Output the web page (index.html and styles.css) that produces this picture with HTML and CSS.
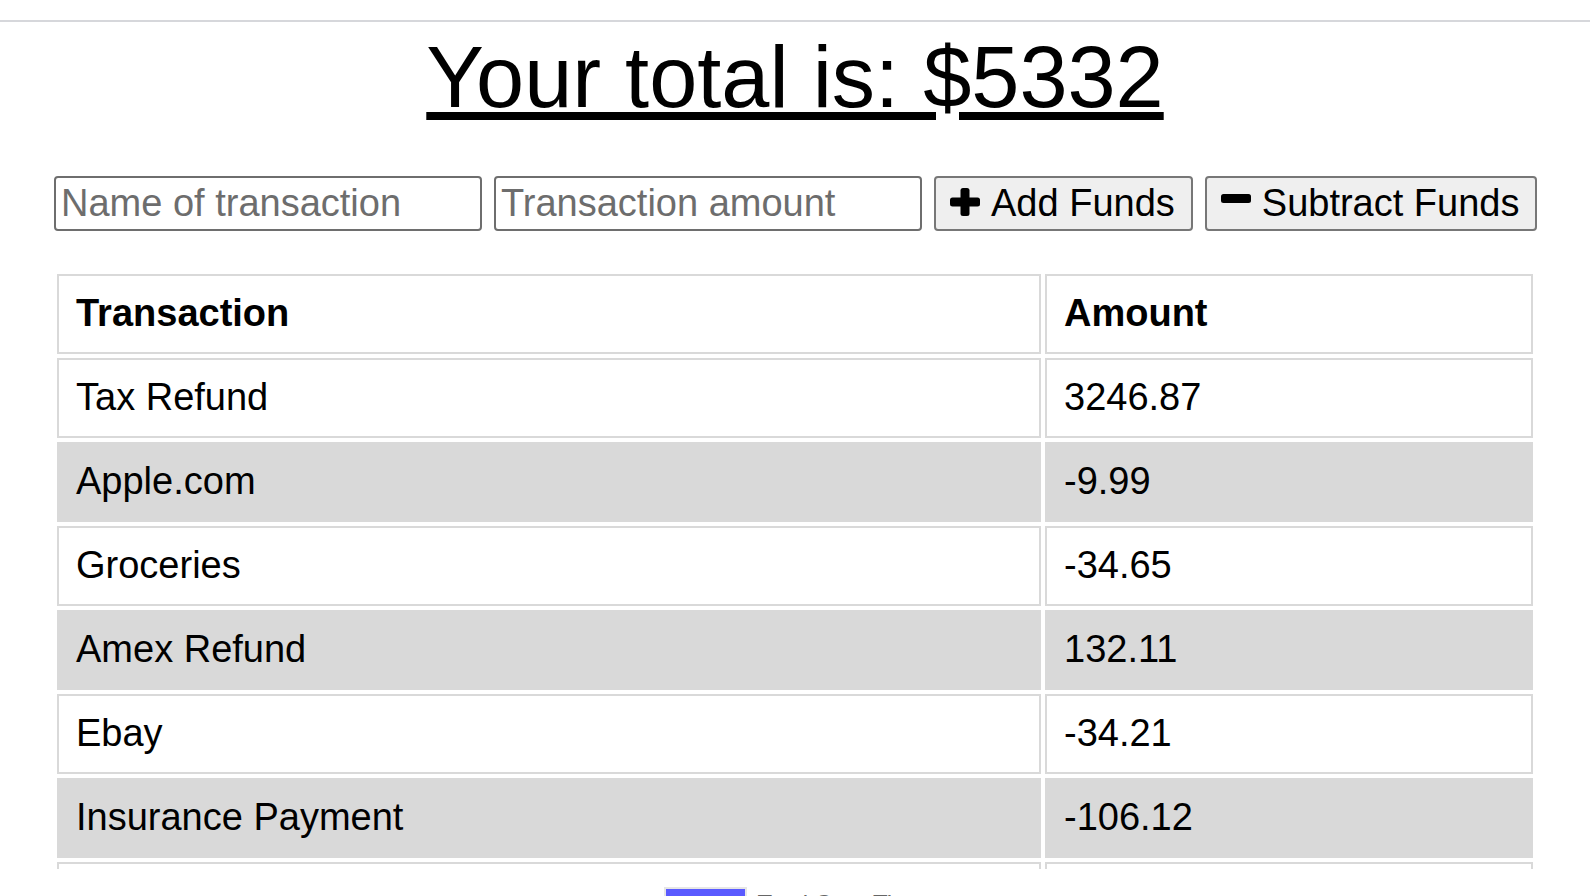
FILE: index.html
```html
<!DOCTYPE html>
<html lang="en">
<head>
<meta charset="utf-8">
<title>Budget Tracker</title>
<link rel="stylesheet" href="styles.css">
</head>
<body>
<div class="topbar"></div>
<h1 class="total">Your total is: $5332</h1>
<div class="page">
  <form class="entry">
    <input class="field" type="text" placeholder="Name of transaction">
    <input class="field" type="number" placeholder="Transaction amount">
    <button class="btn" type="button">
      <svg class="icon" viewBox="0 0 30 28" width="30" height="28"><rect x="10.5" y="0" width="9" height="28" rx="2.5"/><rect x="0" y="9.5" width="30" height="9" rx="2.5"/></svg>
      <span>Add Funds</span>
    </button>
    <button class="btn" type="button">
      <svg class="icon" viewBox="0 0 30 28" width="30" height="28"><rect x="0" y="6" width="30" height="9" rx="2.5"/></svg>
      <span>Subtract Funds</span>
    </button>
  </form>
  <div class="table-wrap">
    <table class="ledger">
      <colgroup><col class="col-name"><col class="col-amount"></colgroup>
      <thead>
        <tr><th>Transaction</th><th>Amount</th></tr>
      </thead>
      <tbody>
        <tr><td>Tax Refund</td><td>3246.87</td></tr>
        <tr><td>Apple.com</td><td>-9.99</td></tr>
        <tr><td>Groceries</td><td>-34.65</td></tr>
        <tr><td>Amex Refund</td><td>132.11</td></tr>
        <tr><td>Ebay</td><td>-34.21</td></tr>
        <tr><td>Insurance Payment</td><td>-106.12</td></tr>
        <tr class="row-empty"><td></td><td></td></tr>
      </tbody>
    </table>
  </div>
  <div class="chart">
    <div class="legend">
      <span class="legend-box"></span>
      <span class="legend-label">Total Over Time</span>
    </div>
  </div>
</div>
</body>
</html>
```
FILE: styles.css
```css
html {
  overflow: hidden;
}
body {
  margin: 0;
  background: #ffffff;
  color: #000000;
  font-family: "Liberation Sans", Arial, Helvetica, sans-serif;
}
.topbar {
  height: 20px;
  border-bottom: 2px solid #d6d7db;
}
.total {
  margin: 5px 0 0;
  font-size: 86.5px;
  line-height: 100px;
  font-weight: normal;
  text-align: center;
  text-decoration: underline;
}
.page {
  width: 1484px;
  margin: 0 auto;
}
.entry {
  margin-top: 49px;
  padding-left: 1px;
  display: flex;
  gap: 12px;
  height: 55px;
}
.field {
  flex: none;
  box-sizing: border-box;
  width: 428px;
  height: 55px;
  margin: 0;
  padding: 0 5px;
  border: 2px solid #6e6e6e;
  border-radius: 4px;
  font-family: inherit;
  font-size: 38px;
  color: #000;
  background: #fff;
}
.field::placeholder {
  color: #6d6d6d;
}
.field::-webkit-outer-spin-button,
.field::-webkit-inner-spin-button {
  -webkit-appearance: none;
  margin: 0;
}
.btn {
  flex: none;
  box-sizing: border-box;
  height: 55px;
  margin: 0;
  padding: 0 16px 0 14px;
  display: flex;
  align-items: center;
  gap: 11px;
  white-space: nowrap;
  border: 2px solid #777777;
  border-radius: 4px;
  background: #efefef;
  font-family: inherit;
  font-size: 38px;
  color: #000;
}
.btn .icon {
  fill: #000;
  flex: none;
  margin-top: -3px;
}
.table-wrap {
  margin-top: 39px;
  height: 599px;
  overflow: hidden;
}
.ledger {
  width: 1484px;
  table-layout: fixed;
  border-collapse: separate;
  border-spacing: 4px;
  font-size: 38px;
}
.col-name {
  width: 984px;
}
.ledger th,
.ledger td {
  box-sizing: border-box;
  height: 80px;
  border: 2px solid #d9d9d9;
  padding: 16px 17px 18px;
  line-height: 42px;
  text-align: left;
  white-space: nowrap;
}
.ledger th {
  font-weight: bold;
}
.ledger tbody tr:nth-child(even) td {
  background: #d9d9d9;
}
.chart {
  margin-top: 15px;
}
.legend {
  display: flex;
  justify-content: center;
  align-items: center;
  gap: 10px;
}
.legend-box {
  width: 79px;
  height: 24px;
  background: #5a5aff;
  border: 2px solid #e6e6e6;
}
.legend-label {
  font-size: 24px;
  color: #666666;
  margin-top: 6px;
}
```
